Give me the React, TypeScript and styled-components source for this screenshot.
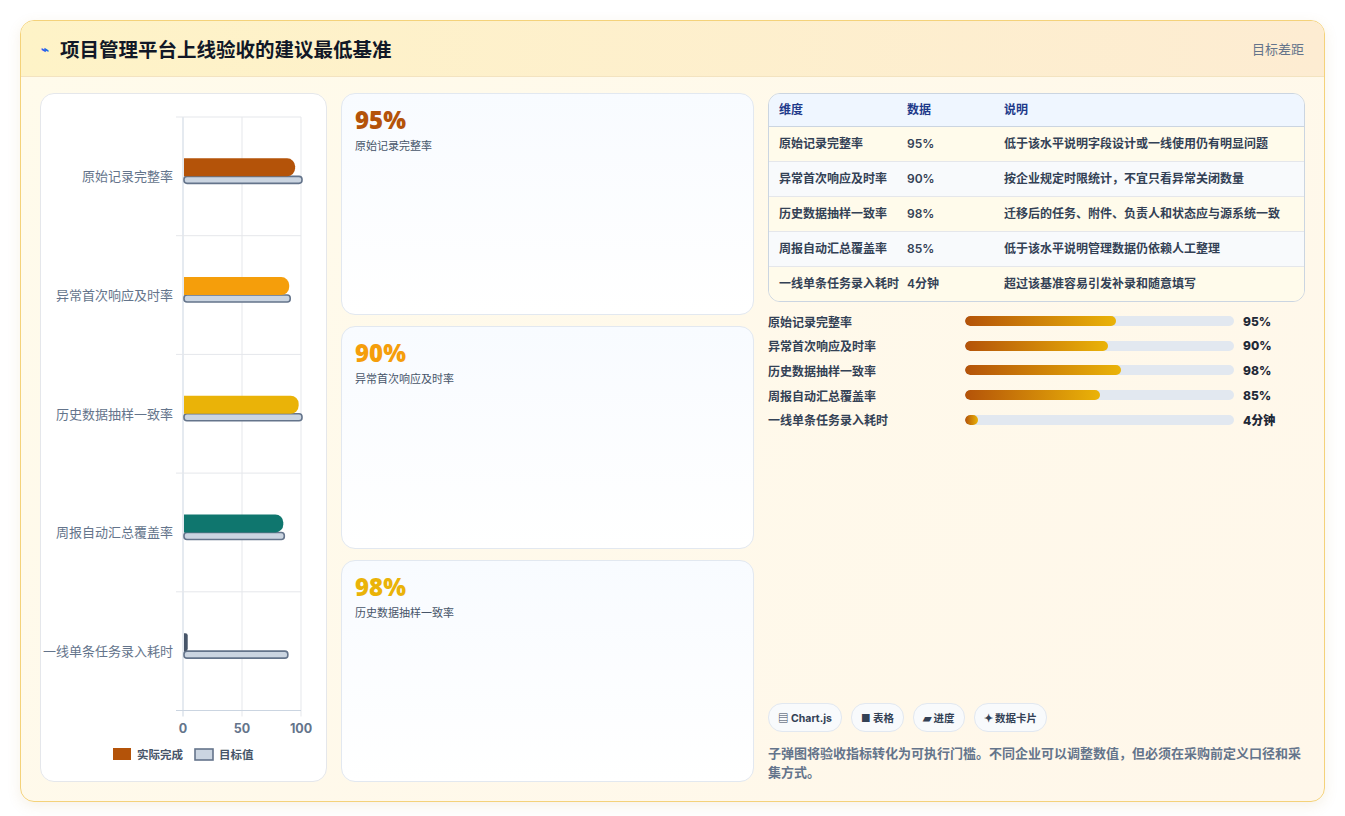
import React from 'react';
import styled, { createGlobalStyle } from 'styled-components';

const GlobalStyle = createGlobalStyle`
  body {
    margin: 0;
    background: #ffffff;
    font-family: Inter, 'Noto Sans CJK SC', sans-serif;
    color: #1f2937;
  }
`;

const Page = styled.div`
  padding: 20px;
  width: 1345px;
  box-sizing: border-box;
`;

const Board = styled.div`
  width: 1305px;
  height: 782px;
  border: 1px solid #f4d27a;
  border-radius: 14px;
  overflow: hidden;
  background: linear-gradient(135deg, #fffbeb 0%, #fff7ea 100%);
  box-shadow: 0 4px 14px rgba(180, 140, 60, 0.12);
  display: flex;
  flex-direction: column;
  box-sizing: border-box;
`;

const Header = styled.div`
  height: 55px;
  flex: none;
  display: flex;
  align-items: center;
  justify-content: space-between;
  padding: 0 20px;
  background: linear-gradient(90deg, #fef3c7 0%, #fdecd2 100%);
  border-bottom: 1px solid #f3e3c0;
`;

const Title = styled.h1`
  margin: 0;
  font-size: 19.5px;
  font-weight: 700;
  color: #111827;
  display: flex;
  align-items: center;
  gap: 11px;
`;

const Spark = styled.span`
  color: #2563eb;
  font-size: 13px;
`;

const HeaderNote = styled.span`
  font-size: 13px;
  color: #64748b;
`;

const Body = styled.div`
  flex: 1;
  display: grid;
  grid-template-columns: 287px 413px 1fr;
  gap: 14px;
  padding: 16px 19px 19px 19px;
  min-height: 0;
`;

const ChartPanel = styled.div`
  background: #ffffff;
  border: 1px solid #e5e7eb;
  border-radius: 14px;
  overflow: hidden;
`;

const Cards = styled.div`
  display: grid;
  grid-template-rows: repeat(3, 1fr);
  gap: 11px;
`;

const StatCard = styled.div`
  border: 1px solid #e2e8f0;
  border-radius: 14px;
  background: linear-gradient(180deg, #f8fbff 0%, #ffffff 100%);
  padding: 12px 13px;
`;

const StatValue = styled.div<{ $color: string }>`
  font-size: 24px;
  font-weight: 800;
  color: ${(p) => p.$color};
  line-height: 28px;
  font-family: 'Open Sans', 'Noto Sans CJK SC', sans-serif;
`;

const StatLabel = styled.div`
  font-size: 11px;
  color: #475569;
  margin-top: 3px;
`;

const RightCol = styled.div`
  display: flex;
  flex-direction: column;
  min-width: 0;
`;

const Table = styled.div`
  border: 1px solid #cbd5e1;
  border-radius: 12px;
  overflow: hidden;
`;

const Row = styled.div<{ $bg: string }>`
  display: grid;
  grid-template-columns: 128px 97px 1fr;
  padding: 0 10px;
  background: ${(p) => p.$bg};
  border-bottom: 1px solid #e5e7eb;
  font-size: 12px;
  font-weight: 600;
  color: #334155;
  &:last-child { border-bottom: none; }
  > div { padding: 8px 8px 8px 0; line-height: 18px; }
`;

const HeadRow = styled(Row)`
  color: #1e3a8a;
  font-weight: 700;
  border-bottom: 1px solid #cbd5e1;
  > div { padding: 7px 8px 7px 0; }
`;

const Progress = styled.div`
  margin-top: 10px;
  display: flex;
  flex-direction: column;
  gap: 6.7px;
`;

const PRow = styled.div`
  display: grid;
  grid-template-columns: 188px 269px 1fr;
  gap: 0 9px;
  align-items: center;
  font-size: 12px;
  font-weight: 600;
  color: #334155;
  height: 18px;
`;

const Track = styled.div`
  height: 10px;
  border-radius: 5px;
  background: #e2e8f0;
  overflow: hidden;
`;

const Fill = styled.div`
  height: 100%;
  border-radius: 5px;
  background: linear-gradient(90deg, #b45309 0%, #eab308 100%);
`;

const PValue = styled.span`
  font-weight: 800;
  color: #1f2937;
  font-size: 12px;
`;

const Spacer = styled.div`
  flex: 1;
`;

const Chips = styled.div`
  display: flex;
  gap: 9px;
`;

const Chip = styled.span`
  height: 27px;
  padding: 0 9px;
  border: 1px solid #e2e8f0;
  border-radius: 14px;
  background: #f8fafc;
  display: flex;
  align-items: center;
  gap: 4px;
  font-size: 10.5px;
  font-weight: 700;
  color: #334155;
`;

const Foot = styled.p`
  margin: 12px 0 0;
  font-size: 13px;
  line-height: 19px;
  font-weight: 600;
  color: #64748b;
`;

const metrics = [
  { name: '原始记录完整率', val: '95%', actual: 95, target: 100, pct: 56, color: '#b45309', note: '低于该水平说明字段设计或一线使用仍有明显问题' },
  { name: '异常首次响应及时率', val: '90%', actual: 90, target: 90, pct: 53, color: '#f59e0b', note: '按企业规定时限统计，不宜只看异常关闭数量' },
  { name: '历史数据抽样一致率', val: '98%', actual: 98, target: 100, pct: 58, color: '#eab308', note: '迁移后的任务、附件、负责人和状态应与源系统一致' },
  { name: '周报自动汇总覆盖率', val: '85%', actual: 85, target: 85, pct: 50, color: '#0f766e', note: '低于该水平说明管理数据仍依赖人工整理' },
  { name: '一线单条任务录入耗时', val: '4分钟', actual: 4, target: 88, pct: 5, color: '#475569', note: '超过该基准容易引发补录和随意填写' },
];

const cardColors = ['#b45309', '#f59e0b', '#eab308'];

function BulletChart() {
  const x0 = 142;
  const scale = 1.18;
  const top = 23;
  const step = 118.7;
  const label = { fontSize: 13, fill: '#64748b', fontFamily: "'Noto Sans CJK SC', sans-serif" } as const;
  return (
    <svg width="287" height="690" viewBox="0 0 287 690">
      {[0, 50, 100].map((v) => (
        <line key={v} x1={x0 + v * scale} x2={x0 + v * scale} y1={top} y2={top + step * 5 + 6} stroke={v === 0 ? '#cbd5e1' : '#e5e7eb'} />
      ))}
      {[0, 1, 2, 3, 4, 5].map((i) => (
        <line key={i} x1={x0 - 7} x2={x0 + 118} y1={top + i * step} y2={top + i * step} stroke={i === 5 ? '#cbd5e1' : '#e5e7eb'} />
      ))}
      {metrics.map((m, i) => {
        const c = top + step * i + step / 2 - 2;
        const w = m.actual * scale;
        const tw = m.target * scale;
        const r = Math.min(8, w / 2);
        return (
          <g key={m.name}>
            <text x={132} y={c + 7} textAnchor="end" {...label}>{m.name}</text>
            <rect x={x0 + 1} y={c + 2} width={tw} height={7} rx={3} fill="#cbd5e1" stroke="#64748b" strokeWidth={1.6} />
            <path d={`M${x0 + 1} ${c - 16} H${x0 + w - r} a${r} ${r} 0 0 1 ${r} ${r} V${c + 2 - r} a${r} ${r} 0 0 1 ${-r} ${r} H${x0 + 1} Z`} fill={m.color} />
          </g>
        );
      })}
      {[0, 50, 100].map((v) => (
        <text key={v} x={x0 + v * scale} y={639} textAnchor="middle" fontSize={12.5} fontWeight={700} fill="#64748b" fontFamily="Inter, sans-serif">{v}</text>
      ))}
      <rect x={72} y={654} width={18} height={12} fill="#b45309" />
      <text x={96} y={665} fontSize={11.5} fill="#475569" fontWeight={600} fontFamily="'Noto Sans CJK SC', sans-serif">实际完成</text>
      <rect x={154} y={655} width={18} height={11} fill="#cbd5e1" stroke="#64748b" strokeWidth={1.6} />
      <text x={178} y={665} fontSize={11.5} fill="#475569" fontWeight={600} fontFamily="'Noto Sans CJK SC', sans-serif">目标值</text>
    </svg>
  );
}

export default function App() {
  return (
    <Page>
      <GlobalStyle />
      <Board>
        <Header>
          <Title><Spark>⌁</Spark>项目管理平台上线验收的建议最低基准</Title>
          <HeaderNote>目标差距</HeaderNote>
        </Header>
        <Body>
          <ChartPanel>
            <BulletChart />
          </ChartPanel>
          <Cards>
            {metrics.slice(0, 3).map((m, i) => (
              <StatCard key={m.name}>
                <StatValue $color={cardColors[i]}>{m.val}</StatValue>
                <StatLabel>{m.name}</StatLabel>
              </StatCard>
            ))}
          </Cards>
          <RightCol>
            <Table>
              <HeadRow $bg="#eff6ff"><div>维度</div><div>数据</div><div>说明</div></HeadRow>
              {metrics.map((m, i) => (
                <Row key={m.name} $bg={i % 2 === 0 ? '#fffbeb' : '#f8fafc'}>
                  <div>{m.name}</div>
                  <div>{m.val}</div>
                  <div>{m.note}</div>
                </Row>
              ))}
            </Table>
            <Progress>
              {metrics.map((m) => (
                <PRow key={m.name}>
                  <span>{m.name}</span>
                  <Track><Fill style={{ width: `${m.pct}%` }} /></Track>
                  <PValue>{m.val}</PValue>
                </PRow>
              ))}
            </Progress>
            <Spacer />
            <Chips>
              <Chip>▤ Chart.js</Chip>
              <Chip>■ 表格</Chip>
              <Chip>▰ 进度</Chip>
              <Chip>✦ 数据卡片</Chip>
            </Chips>
            <Foot>子弹图将验收指标转化为可执行门槛。不同企业可以调整数值，但必须在采购前定义口径和采集方式。</Foot>
          </RightCol>
        </Body>
      </Board>
    </Page>
  );
}
